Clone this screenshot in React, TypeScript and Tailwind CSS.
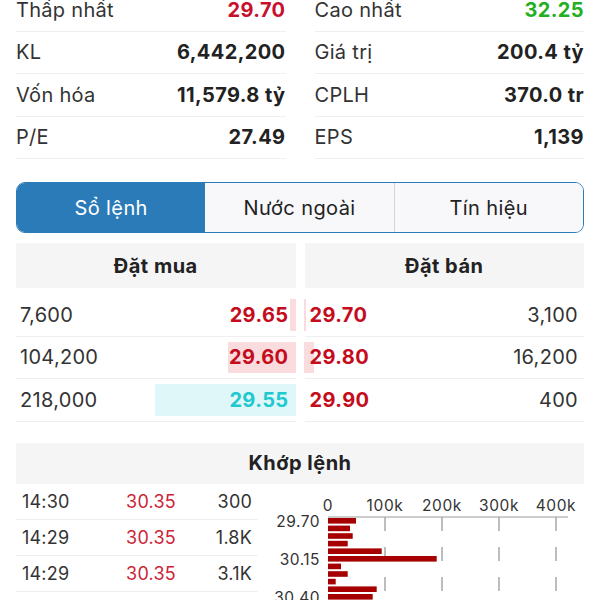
import React from "react";

const stats: [string, string, string, string, string, string][] = [
  ["Thấp nhất", "29.70", "text-[#c8102e]", "Cao nhất", "32.25", "text-[#22b022]"],
  ["KL", "6,442,200", "text-[#222]", "Giá trị", "200.4 tỷ", "text-[#222]"],
  ["Vốn hóa", "11,579.8 tỷ", "text-[#222]", "CPLH", "370.0 tr", "text-[#222]"],
  ["P/E", "27.49", "text-[#222]", "EPS", "1,139", "text-[#222]"],
];

const bids = [
  { q: "7,600", p: "29.65", w: 6, bar: "bg-[#fadcdf]", c: "text-[#c40c1c]" },
  { q: "104,200", p: "29.60", w: 68, bar: "bg-[#fadcdf]", c: "text-[#c40c1c]" },
  { q: "218,000", p: "29.55", w: 141, bar: "bg-[#dff7f8]", c: "text-[#1fc9cf]" },
];
const asks = [
  { q: "3,100", p: "29.70", w: 2 },
  { q: "16,200", p: "29.80", w: 10 },
  { q: "400", p: "29.90", w: 0 },
];

const trades = [
  ["14:30", "30.35", "300"],
  ["14:29", "30.35", "1.8K"],
  ["14:29", "30.35", "3.1K"],
];

const barWidths = [28, 22, 24.7, 19.7, 53.7, 108.7, 13, 19.7, 7.7, 48.7, 44.7, 30];

function Chart() {
  const ticks = [
    { x: 58, l: "0" },
    { x: 115, l: "100k" },
    { x: 172, l: "200k" },
    { x: 229, l: "300k" },
    { x: 286, l: "400k" },
  ];
  return (
    <svg width="314" height="116" viewBox="0 0 314 116" fontFamily="Inter, 'Liberation Sans', sans-serif">
      {ticks.map((t) => (
        <text key={t.l} x={t.x} y={27} fontSize="15.5" letterSpacing="0.6" fill="#333" textAnchor="middle">
          {t.l}
        </text>
      ))}
      <line x1={58} y1={33} x2={298} y2={33} stroke="#9a9a9a" strokeWidth="1" />
      {ticks.slice(1).map((t) => (
        <line key={t.l} x1={t.x} y1={33} x2={t.x} y2={116} stroke="#a8a8a8" strokeWidth="1.5" strokeDasharray="14 16" />
      ))}
      {barWidths.map((w, i) => (
        <rect key={i} x={58} y={34 + i * 7.6} width={w} height={5.6} fill="#a60000" />
      ))}
      <text x={50} y={43} fontSize="15.5" letterSpacing="0.5" fill="#333" textAnchor="end">29.70</text>
      <text x={50} y={81} fontSize="15.5" letterSpacing="0.5" fill="#333" textAnchor="end">30.15</text>
      <text x={50} y={119} fontSize="15.5" letterSpacing="0.5" fill="#333" textAnchor="end">30.40</text>
    </svg>
  );
}

export default function App() {
  return (
    <div className="w-[600px] h-[600px] overflow-hidden bg-white font-[Inter,'Liberation_Sans',sans-serif] text-[#222]">
      {/* Stats */}
      <div className="-mt-[11px] grid grid-cols-2 gap-x-[29px] pl-4 pr-4">
        {[0, 1].map((col) => (
          <div key={col} className="flex flex-col">
            {stats.map((r, i) => (
              <div key={i} className="flex h-[42.5px] items-center justify-between border-b border-[#efefef]">
                <span className="text-[20px] tracking-[0.3px] text-[#333]">{col === 0 ? r[0] : r[3]}</span>
                <span className={`text-[20px] font-bold tracking-[0.4px] ${col === 0 ? r[2] : r[5]}`}>{col === 0 ? r[1] : r[4]}</span>
              </div>
            ))}
          </div>
        ))}
      </div>

      {/* Tabs */}
      <div className="mx-4 mt-[23px] flex h-[51px] overflow-hidden rounded-[9px] border-[1.5px] border-[#2b7bb9]">
        <div className="flex flex-1 items-center justify-center bg-[#2b7bb9] text-[20px] tracking-[0.4px] text-white">Sổ lệnh</div>
        <div className="flex flex-1 items-center justify-center bg-[#f8f8fa] text-[20px] tracking-[0.4px] text-[#222]">Nước ngoài</div>
        <div className="flex flex-1 items-center justify-center border-l border-[#d4d4d8] bg-[#f8f8fa] text-[20px] tracking-[0.4px] text-[#222]">Tín hiệu</div>
      </div>

      {/* Order book */}
      <div className="mx-4 mt-[10px] grid grid-cols-2 gap-x-[9px]">
        <div className="flex h-[45px] items-center justify-center bg-[#f5f5f6] text-[20px] font-bold tracking-[0.5px]">Đặt mua</div>
        <div className="flex h-[45px] items-center justify-center bg-[#f5f5f6] text-[20px] font-bold tracking-[0.5px]">Đặt bán</div>
        <div className="mt-[6px] flex flex-col">
          {bids.map((b) => (
            <div key={b.p} className="relative flex h-[42.5px] items-center justify-between border-b border-[#efefef] pl-[4px] pr-[7px]">
              <div className={`absolute right-0 top-[5px] bottom-[5px] ${b.bar}`} style={{ width: b.w }} />
              <span className="relative text-[20px] tracking-[0.3px] text-[#333]">{b.q}</span>
              <span className={`relative text-[20px] font-bold tracking-[0.4px] ${b.c}`}>{b.p}</span>
            </div>
          ))}
        </div>
        <div className="mt-[6px] flex flex-col">
          {asks.map((a) => (
            <div key={a.p} className="relative flex h-[42.5px] items-center justify-between border-b border-[#efefef] pl-[5px] pr-[6px]">
              <div className="absolute left-[-1px] top-[5px] bottom-[5px] bg-[#fadcdf]" style={{ width: a.w }} />
              <span className="relative text-[20px] font-bold tracking-[0.4px] text-[#c40c1c]">{a.p}</span>
              <span className="relative text-[20px] tracking-[0.3px] text-[#333]">{a.q}</span>
            </div>
          ))}
        </div>
      </div>

      {/* Khớp lệnh */}
      <div className="mx-4 mt-[21px] flex h-[41px] items-center justify-center bg-[#f5f5f6] text-[20px] font-bold tracking-[0.5px]">Khớp lệnh</div>
      <div className="flex pl-4">
        <div className="flex w-[242px] flex-col">
          {trades.map((t, i) => (
            <div key={i} className="flex h-[36px] items-center border-b border-[#efefef] text-[18px] tracking-[0.2px] text-[#333]">
              <span className="w-[105px] pl-[6px]">{t[0]}</span>
              <span className="w-[60px] text-center text-[#cc2438]">{t[1]}</span>
              <span className="flex-1 pr-[6px] text-right">{t[2]}</span>
            </div>
          ))}
        </div>
        <div className="ml-[12px]">
          <Chart />
        </div>
      </div>
    </div>
  );
}
